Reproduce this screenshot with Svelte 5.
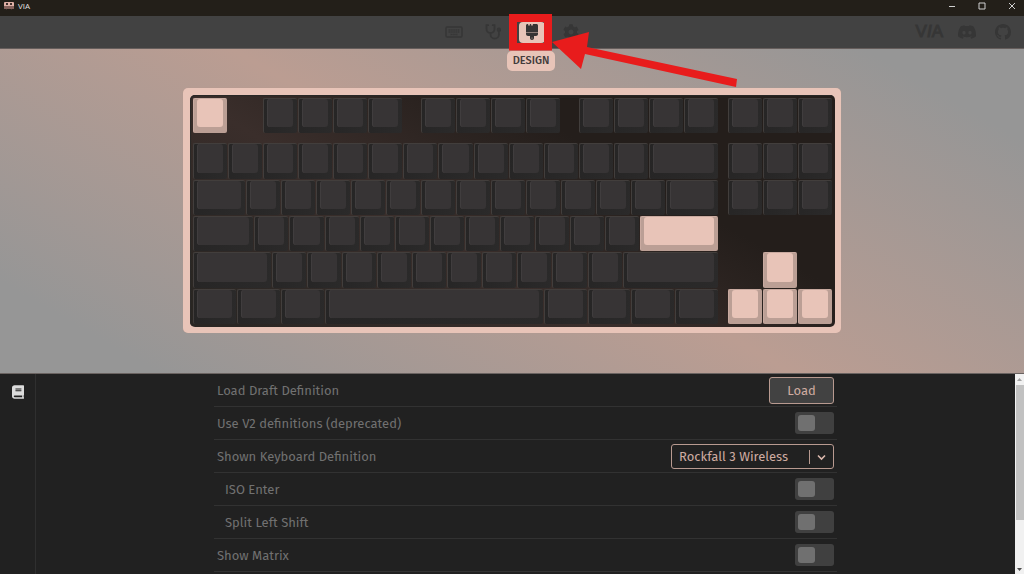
<script>
  // ── Keyboard layout ───────────────────────────────────────────────────────
  // Numbers are key widths in units, { gap } skips space, { w, accent } colours a key.

  const fill = (n) => Array(n).fill(1);
  const nav = [{ gap: 0.25 }, 1, 1, 1];

  const layout = [
    { line: 1, keys: [{ w: 1, accent: true }, { gap: 1 }, ...fill(4), { gap: 0.5 }, ...fill(4), { gap: 0.5 }, ...fill(4), ...nav] },
    { line: 3, keys: [...fill(13), 2, ...nav] },
    { line: 4, keys: [1.5, ...fill(12), 1.5, ...nav] },
    { line: 5, keys: [1.75, ...fill(11), { w: 2.25, accent: true }] },
    { line: 6, keys: [2.25, ...fill(10), 2.75, { gap: 1.25 }, { w: 1, accent: true }] },
    {
      line: 7,
      keys: [
        1.25, 1.25, 1.25, 6.25, 1.25, 1.25, 1.25, 1.25, { gap: 0.25 },
        { w: 1, accent: true }, { w: 1, accent: true }, { w: 1, accent: true },
      ],
    },
  ];

  const keys = layout.flatMap(({ line, keys }) => {
    const result = [];
    let x = 0;
    for (const key of keys) {
      if (key.gap) { x += key.gap; continue; }
      const w = key.w ?? key;
      // four grid columns per unit
      result.push({ line, col: x * 4 + 1, span: w * 4, accent: !!key.accent });
      x += w;
    }
    return result;
  });

  // ── Settings ──────────────────────────────────────────────────────────────

  let useV2 = $state(false);
  let isoEnter = $state(false);
  let splitShift = $state(false);
  let showMatrix = $state(false);
  let definition = $state('Rockfall 3 Wireless');
</script>

{#snippet toggle(id, checked, onchange)}
  <input class="toggle" type="checkbox" {id} {checked} {onchange} />
{/snippet}

<div class="app">
  <!-- ── Title bar ───────────────────────────────────────────────────────── -->
  <div class="titlebar">
    <svg class="app-icon" viewBox="0 0 10 8" width="10" height="8" aria-hidden="true">
      <rect width="10" height="5" rx="1" fill="#e0b0a6" />
      <rect y="4" width="10" height="3" fill="#86625c" />
      <path d="M2 1h2v2H2zM6 1h2v2H6zM2 7h1v1H2zM7 7h1v1H7z" fill="#40302d" />
    </svg>
    <span class="app-name">VIA</span>
    <div class="window-buttons">
      <button aria-label="Minimize"><svg viewBox="0 0 8 8" width="8" height="8"><path d="M1 4.5h6" /></svg></button>
      <button aria-label="Maximize"><svg viewBox="0 0 8 8" width="8" height="8"><path d="M1 1h6v6H1z" /></svg></button>
      <button aria-label="Close"><svg viewBox="0 0 8 8" width="8" height="8"><path d="M1 1l6 6M7 1L1 7" /></svg></button>
    </div>
  </div>

  <!-- ── Header ──────────────────────────────────────────────────────────── -->
  <header>
    <nav>
      <button aria-label="Configure">
        <svg viewBox="0 0 18 12" width="18" height="12">
          <rect x="1" y="1" width="16" height="10" rx="1" fill="none" stroke="currentColor" stroke-width="1.5" />
          <path d="M3.5 4h11M3.5 6h11M5.5 8.5h7" fill="none" stroke="currentColor" stroke-width="1.3" stroke-dasharray="1.4 .5" />
        </svg>
      </button>
      <button aria-label="Key tester">
        <svg viewBox="0 0 16 16" width="16" height="16" fill="none" stroke="currentColor" stroke-width="1.8" stroke-linecap="round">
          <path d="M3.2 1.2H1.5V5a4 4 0 0 0 8 0V1.2H7.8M5.5 9.3v1.2a4.2 4.2 0 0 0 8.4 0V7.4" />
          <circle cx="13.9" cy="5.8" r="1.3" />
        </svg>
      </button>
      <div class="current">
        <button class="active" aria-label="Design">
          <svg viewBox="0 0 384 512" width="12" height="16">
            <path fill="currentColor" d="M162.400 6c-1.500-3.600-5-6-8.900-6h-19c-3.900 0-7.500 2.400-8.900 6L104.900 57.700c-3.200 8-14.600 8-17.800 0L66.400 6c-1.500-3.600-5-6-8.900-6H48C21.500 0 0 21.500 0 48v208h384V48c0-26.500-21.500-48-48-48H230.500c-3.900 0-7.500 2.400-8.900 6L200.900 57.700c-3.200 8-14.600 8-17.800 0L162.400 6zM0 288v32c0 35.300 28.700 64 64 64h64v64c0 35.300 28.700 64 64 64s64-28.700 64-64v-64h64c35.300 0 64-28.700 64-64v-32H0zM192 432a16 16 0 1 1 0 32 16 16 0 1 1 0-32z" />
            <path fill="#8c7b76" d="M0 256h384v32H0z" />
          </svg>
        </button>
        <span class="tooltip">DESIGN</span>
        <svg class="callout" viewBox="0 0 230 76" width="230" height="76" aria-hidden="true">
          <path fill="#424242" d="M8 8h2v21H8z" />
          <path fill-rule="evenodd" d="M0 0h43v36.500H0zM8 8v21h27V8z" />
          <path d="M43 28 80 18 78 33 228 65 227 73 76 40 72 55z" />
        </svg>
      </div>
      <button aria-label="Settings">
        <svg viewBox="0 0 512 512" width="16" height="16" fill="currentColor">
          <path d="M487.400 315.700l-42.600-24.600c4.300-23.200 4.300-47 0-70.200l42.600-24.600c4.900-2.800 7.100-8.600 5.500-14-11.100-35.600-30-67.800-54.700-94.600-3.800-4.100-10-5.100-14.800-2.300L380.800 110c-17.900-15.400-38.500-27.300-60.800-35.100V25.800c0-5.600-3.900-10.500-9.400-11.700-36.700-8.200-74.300-7.800-109.200 0-5.500 1.200-9.400 6.100-9.400 11.700V75c-22.200 7.900-42.800 19.800-60.800 35.100L88.700 85.500c-4.900-2.800-11-1.900-14.800 2.300-24.700 26.700-43.600 58.900-54.700 94.600-1.700 5.400.6 11.200 5.500 14L67.300 221c-4.300 23.200-4.300 47 0 70.200l-42.600 24.600c-4.900 2.800-7.100 8.600-5.500 14 11.100 35.600 30 67.800 54.700 94.600 3.800 4.100 10 5.100 14.800 2.300l42.600-24.600c17.900 15.400 38.500 27.300 60.800 35.100v49.200c0 5.600 3.900 10.500 9.400 11.700 36.700 8.200 74.300 7.800 109.200 0 5.500-1.200 9.400-6.100 9.400-11.700v-49.200c22.200-7.900 42.800-19.800 60.800-35.100l42.600 24.600c4.900 2.800 11 1.900 14.800-2.300 24.700-26.700 43.600-58.900 54.700-94.600 1.500-5.500-.7-11.300-5.600-14.100zM256 336c-44.100 0-80-35.900-80-80s35.900-80 80-80 80 35.900 80 80-35.900 80-80 80z" />
        </svg>
      </button>
    </nav>
    <div class="links">
      <a class="via" href="#firmware">V<i>I</i>A</a>
      <a href="#discord" aria-label="Discord">
        <svg viewBox="0 3 24 18" width="18" height="14" fill="currentColor">
          <path d="M20.317 4.370a19.790 19.790 0 0 0-4.885-1.515.074.074 0 0 0-.079.037c-.210.375-.444.864-.608 1.250a18.270 18.270 0 0 0-5.487 0 12.640 12.640 0 0 0-.617-1.250.077.077 0 0 0-.079-.037A19.736 19.736 0 0 0 3.677 4.370a.070.070 0 0 0-.032.027C.533 9.046-.320 13.580.099 18.058a.082.082 0 0 0 .031.057 19.900 19.900 0 0 0 5.993 3.030.078.078 0 0 0 .084-.028 14.090 14.090 0 0 0 1.226-1.994.076.076 0 0 0-.041-.106 13.107 13.107 0 0 1-1.872-.892.077.077 0 0 1-.008-.128c.126-.094.252-.192.372-.291a.074.074 0 0 1 .077-.010c3.928 1.793 8.180 1.793 12.062 0a.074.074 0 0 1 .078.009c.120.099.246.198.373.292a.077.077 0 0 1-.006.127 12.299 12.299 0 0 1-1.873.892.077.077 0 0 0-.041.107c.360.698.772 1.362 1.225 1.993a.076.076 0 0 0 .084.028 19.839 19.839 0 0 0 6.002-3.030.077.077 0 0 0 .032-.054c.500-5.177-.838-9.674-3.549-13.660a.061.061 0 0 0-.031-.030zM8.020 15.330c-1.183 0-2.157-1.085-2.157-2.419s.955-2.419 2.157-2.419c1.210 0 2.176 1.096 2.157 2.420 0 1.333-.956 2.418-2.157 2.418zm7.975 0c-1.183 0-2.157-1.085-2.157-2.419s.955-2.419 2.157-2.419c1.210 0 2.176 1.096 2.157 2.420 0 1.333-.946 2.418-2.157 2.418z" />
        </svg>
      </a>
      <a href="#github" aria-label="GitHub">
        <svg viewBox="0 0 16 16" width="16" height="16" fill="currentColor">
          <path d="M8 0C3.580 0 0 3.580 0 8c0 3.540 2.290 6.530 5.470 7.590.4.070.55-.17.55-.38 0-.19-.01-.82-.01-1.490-2.010.37-2.530-.49-2.690-.94-.09-.23-.48-.94-.82-1.130-.28-.15-.68-.52-.01-.53.63-.01 1.080.58 1.230.82.72 1.210 1.870.87 2.330.66.07-.52.28-.87.51-1.070-1.780-.2-3.640-.89-3.640-3.950 0-.87.31-1.590.82-2.150-.08-.2-.36-1.020.08-2.120 0 0 .67-.21 2.200.82.64-.18 1.320-.27 2-.27s1.360.09 2 .27c1.530-1.040 2.200-.82 2.200-.82.44 1.100.16 1.920.08 2.120.51.56.82 1.270.82 2.150 0 3.070-1.870 3.750-3.650 3.950.29.25.54.73.54 1.480 0 1.070-.01 1.930-.01 2.200 0 .21.15.46.55.38A8.010 8.010 0 0 0 16 8c0-4.420-3.580-8-8-8z" />
        </svg>
      </a>
    </div>
  </header>

  <!-- ── Keyboard ────────────────────────────────────────────────────────── -->
  <main>
    <div class="case">
      <div class="plate">
        <div class="keys">
          {#each keys as key}
            <div
              class="key"
              class:accent={key.accent}
              style="grid-row: {key.line}; grid-column: {key.col} / span {key.span}"
            >
              <div class="cap"></div>
            </div>
          {/each}
        </div>
      </div>
    </div>
  </main>

  <!-- ── Design settings ─────────────────────────────────────────────────── -->
  <section class="panel">
    <aside>
      <button aria-label="Definitions">
        <svg viewBox="0 0 448 512" width="12" height="14" fill="currentColor">
          <path d="M448 360V24c0-13.300-10.700-24-24-24H96C43 0 0 43 0 96v320c0 53 43 96 96 96h328c13.300 0 24-10.700 24-24v-16c0-7.500-3.500-14.300-8.900-18.700-4.200-15.400-4.200-59.300 0-74.700 5.400-4.300 8.900-11.100 8.900-18.600zM128 134c0-3.300 2.700-6 6-6h212c3.300 0 6 2.700 6 6v20c0 3.300-2.700 6-6 6H134c-3.300 0-6-2.700-6-6v-20zm0 64c0-3.300 2.700-6 6-6h212c3.300 0 6 2.700 6 6v20c0 3.300-2.700 6-6 6H134c-3.300 0-6-2.700-6-6v-20zm253.400 250H96c-17.700 0-32-14.300-32-32 0-17.600 14.400-32 32-32h285.400c-1.900 17.100-1.900 46.900 0 64z" />
        </svg>
      </button>
    </aside>

    <div class="settings">
      <div class="row">
        <span>Load Draft Definition</span>
        <button class="load">Load</button>
      </div>
      <div class="row">
        <label for="v2">Use V2 definitions (deprecated)</label>
        {@render toggle('v2', useV2, () => (useV2 = !useV2))}
      </div>
      <div class="row">
        <label for="definition">Shown Keyboard Definition</label>
        <div class="select">
          <select id="definition" bind:value={definition}>
            <option>Rockfall 3 Wireless</option>
          </select>
          <svg viewBox="0 0 24 14" width="24" height="14" fill="none" aria-hidden="true">
            <path d="M.5 0v14" stroke="#b89a90" />
            <path d="M9 5.500l3.500 3.500L16 5.500" stroke="#dbb8ad" stroke-width="1.600" />
          </svg>
        </div>
      </div>
      <div class="row nested">
        <label for="iso">ISO Enter</label>
        {@render toggle('iso', isoEnter, () => (isoEnter = !isoEnter))}
      </div>
      <div class="row nested">
        <label for="split">Split Left Shift</label>
        {@render toggle('split', splitShift, () => (splitShift = !splitShift))}
      </div>
      <div class="row">
        <label for="matrix">Show Matrix</label>
        {@render toggle('matrix', showMatrix, () => (showMatrix = !showMatrix))}
      </div>
    </div>

    <div class="scrollbar" aria-hidden="true">
      <svg viewBox="0 0 9 11" width="9" height="11"><path d="M2 7l2.500-3L7 7z" fill="#a3a3a3" /></svg>
      <div class="track"><div class="thumb"></div></div>
      <svg viewBox="0 0 9 11" width="9" height="11"><path d="M2 5l2.500 3L7 5z" fill="#505050" /></svg>
    </div>
  </section>
</div>

<style>
  :global(body) { margin: 0; background: #212121; }

  .app {
    display: flex;
    flex-direction: column;
    height: 100vh;
    overflow: hidden;
    font-family: 'Fira Sans', 'Open Sans', sans-serif;
    font-size: 13px;
    color: #717171;
  }
  button {
    display: flex;
    align-items: center;
    justify-content: center;
    padding: 0;
    border: none;
    background: none;
    color: inherit;
    font: inherit;
    cursor: pointer;
  }
  svg { display: block; }

  /* ── Title bar ── */
  .titlebar {
    display: flex;
    align-items: center;
    gap: 4px;
    height: 16px;
    flex-shrink: 0;
    padding: 0 8px 4px 4px;
    box-sizing: border-box;
    background: #231f19;
    color: #e0e0e0;
  }
  .app-name {
    font-family: 'Open Sans', sans-serif;
    font-size: 8px;
    line-height: 12px;
  }
  .window-buttons {
    display: flex;
    gap: 22px;
    margin-left: auto;
  }
  .window-buttons svg { fill: none; stroke: #d0d0d0; }

  /* ── Header ── */
  header {
    display: grid;
    grid-template-columns: 1fr auto 1fr;
    align-items: center;
    height: 33px;
    flex-shrink: 0;
    box-sizing: border-box;
    background: #424242;
    border-bottom: 1px solid #665e5c;
    color: #363636;
  }
  nav {
    grid-column: 2;
    display: flex;
    gap: 13px;
    padding-left: 1px;
  }
  nav button {
    width: 26px;
    height: 21px;
    border-radius: 4px;
  }
  .current { position: relative; z-index: 1; }
  nav .active { background: #e8c4b8; color: #363434; }
  .tooltip {
    position: absolute;
    top: 29px;
    left: -12px;
    width: 48px;
    border-radius: 5px;
    background: #e8c4b8;
    color: #423c3b;
    font-size: 11px;
    font-weight: 500;
    line-height: 20px;
    text-align: center;
  }
  .callout {
    position: absolute;
    top: -8px;
    left: -10px;
    fill: #e81c1c;
    pointer-events: none;
  }
  .links {
    display: flex;
    align-items: center;
    justify-content: flex-end;
    gap: 19px;
    padding-right: 13px;
  }
  .links a { color: inherit; text-decoration: none; }
  .links .via {
    margin-right: -4px;
    font-family: 'Liberation Sans', Arial, sans-serif;
    font-size: 17px;
    line-height: 20px;
    -webkit-text-stroke: 1px currentColor;
  }

  /* ── Keyboard ── */
  main {
    display: flex;
    justify-content: center;
    flex-shrink: 0;
    padding: 39px 16px 40px;
    background: linear-gradient(30deg, #969696 10%, #bb9d92 50%, #969696 90%);
    border-bottom: 1px solid #6a6361;
  }
  .case {
    width: 100%;
    max-width: 658px;
    box-sizing: border-box;
    padding: 7px 6px 6px 7px;
    border-radius: 5px;
    background: #e8c4b8;
    box-shadow: 0 0 1px #b89a90;
  }
  .plate {
    padding: 3px 2px 2px 3px;
    border-radius: 5px;
    background: linear-gradient(30deg, #2a2623 5%, #3a2e2b 38%, #241e1b 68%);
    box-shadow: inset 1px 1px 1px #2a2827;
  }
  .keys {
    display: grid;
    grid-template-columns: repeat(73, 1fr);
    grid-template-rows: 4fr 1fr repeat(5, 4fr);
    aspect-ratio: 640 / 227;
  }
  .key {
    display: flex;
    margin: 0 1px 1px 0;
    padding: 0 4px 6px 3px;
    border: solid #423e3c;
    border-width: 1px 0 0 1px;
    border-radius: 2px;
    background: linear-gradient(100deg, #262525, #2b2a2a);
  }
  .cap {
    flex: 1;
    border-radius: 3px;
    background: #373435;
    box-shadow: inset 1px 0 #403d3e;
  }
  .key.accent {
    border-color: #c9aaa0;
    background: #bb9f95;
  }
  .accent .cap { background: #e8c4b8; box-shadow: none; }

  /* ── Settings panel ── */
  .panel {
    display: flex;
    flex: 1;
    min-height: 0;
    background: #212121;
  }
  aside {
    width: 35px;
    border-right: 1px solid #2f2f2f;
    color: #dcdcdc;
  }
  aside button { width: 35px; height: 35px; }
  .settings {
    width: 100%;
    max-width: 623px;
    margin: 0 auto;
  }
  .row {
    display: flex;
    align-items: center;
    justify-content: space-between;
    height: 32px;
    padding: 0 3px;
    border-bottom: 1px solid #323232;
  }
  .nested { padding-left: 11px; }

  .load {
    width: 65px;
    height: 27px;
    border: 1px solid #b89a90;
    border-radius: 3px;
    background: #424242;
    color: #cfaca1;
  }
  .toggle {
    appearance: none;
    display: flex;
    width: 39px;
    height: 22px;
    margin: 0;
    padding: 3px;
    box-sizing: border-box;
    border-radius: 3px;
    background: #404040;
    cursor: pointer;
  }
  .toggle::before {
    content: '';
    width: 17px;
    border-radius: 3px;
    background: #707070;
  }
  .toggle:checked { justify-content: flex-end; }
  .toggle:checked::before { background: #e8c4b8; }

  .select { position: relative; }
  .select select {
    appearance: none;
    display: block;
    width: 163px;
    height: 25px;
    padding: 0 28px 0 7px;
    border: 1px solid #b89a90;
    border-radius: 3px;
    background: #212121;
    color: #cfaca1;
    font: inherit;
  }
  .select svg {
    position: absolute;
    top: 6px;
    right: 1px;
    pointer-events: none;
  }

  /* ── Scrollbar ── */
  .scrollbar {
    display: flex;
    flex-direction: column;
    width: 9px;
    background: #f1f1f1;
  }
  .track { flex: 1; padding-left: 1px; }
  .thumb { height: 76%; background: #c1c1c1; }
</style>
